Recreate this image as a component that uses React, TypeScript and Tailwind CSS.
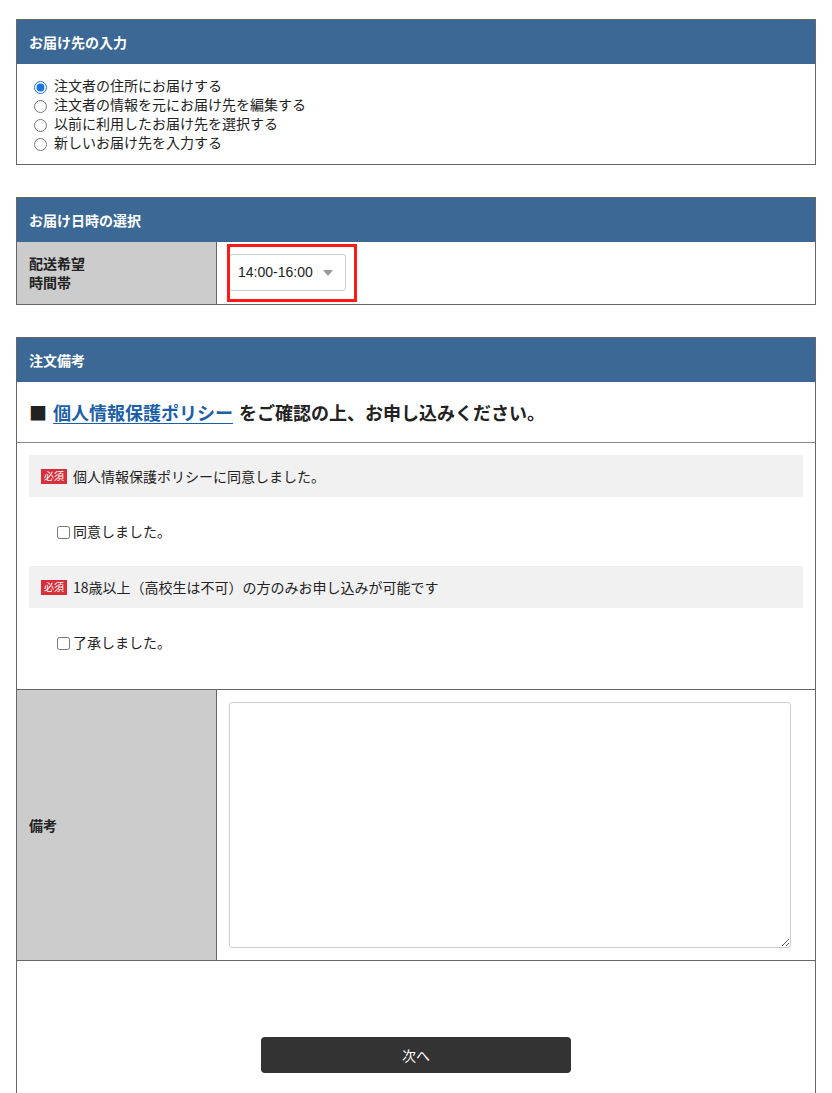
import React from "react";

const font = { fontFamily: '"Noto Sans CJK JP", "Noto Sans", sans-serif' };

const SectionHeader = ({ title }: { title: string }) => (
  <div className="h-[44px] bg-[#3b6895] flex items-center px-3 text-[14px] font-bold text-white">
    {title}
  </div>
);

const Required = () => (
  <span className="inline-flex items-center justify-center bg-[#d7303b] text-white text-[10px] leading-none h-[15px] px-[3px] mr-[6px]">
    必須
  </span>
);

const radios = [
  "注文者の住所にお届けする",
  "注文者の情報を元にお届け先を編集する",
  "以前に利用したお届け先を選択する",
  "新しいお届け先を入力する",
];

export default function App() {
  return (
    <div className="bg-white text-[#222] min-h-[1093px] pt-[19px]" style={font}>
      {/* お届け先 */}
      <section className="mx-4 border border-[#666]">
        <SectionHeader title="お届け先の入力" />
        <div className="pt-[12px] pb-[12px] px-4 text-[14px] leading-[19px]">
          {radios.map((r, i) => (
            <label key={r} className="flex items-center">
              <input
                type="radio"
                name="dest"
                defaultChecked={i === 0}
                className="w-[13px] h-[13px] m-0 mt-[3px] ml-[1px] mr-[7px] accent-[#1a73e8]"
              />
              {r}
            </label>
          ))}
        </div>
      </section>

      {/* 日時 */}
      <section className="mx-4 mt-[32px] border border-[#666]">
        <SectionHeader title="お届け日時の選択" />
        <div className="flex h-[62px]">
          <div className="w-[200px] shrink-0 bg-[#cccccc] border-r border-[#666] flex items-center px-3 text-[14px] font-bold leading-[19px]">
            配送希望
            <br />
            時間帯
          </div>
          <div className="relative flex-1 pl-[12px] pt-[12px]">
            <div className="w-[117px] h-[37px] border border-[#ccc] rounded-[3px] flex items-center justify-between pl-[8px] pr-[12px] text-[14px] text-[#222]" style={{ fontFamily: '"Liberation Sans", "Noto Sans CJK JP", sans-serif' }}>
              14:00-16:00
              <span className="w-0 h-0 border-l-[5px] border-r-[5px] border-t-[6px] border-l-transparent border-r-transparent border-t-[#999]" />
            </div>
            <div className="absolute left-[10px] top-[2px] w-[130px] h-[58px] border-[3px] border-[#ff1a1a] pointer-events-none" />
          </div>
        </div>
      </section>

      {/* 注文備考 */}
      <section className="mx-4 mt-[32px] border border-[#666] border-b-0">
        <SectionHeader title="注文備考" />
        <div className="h-[61px] flex items-center px-3 text-[18px] font-bold border-b border-[#888]">
          <span className="mr-[6px]">■</span>
          <a href="#" className="text-[#1b5fa8] underline underline-offset-[3px] mr-[6px]">
            個人情報保護ポリシー
          </a>
          をご確認の上、お申し込みください。
        </div>

        <div className="px-3 pt-[12px] pb-[12px] text-[14px]">
          <div className="h-[42px] bg-[#f1f1f1] flex items-center px-3">
            <Required />
            個人情報保護ポリシーに同意しました。
          </div>
          <label className="h-[69px] flex items-center pl-[28px]">
            <input type="checkbox" className="w-[13px] h-[13px] m-0 mt-[2px] mr-[3px]" />
            同意しました。
          </label>
          <div className="h-[42px] bg-[#f1f1f1] flex items-center px-3">
            <Required />
            18歳以上（高校生は不可）の方のみお申し込みが可能です
          </div>
          <label className="h-[69px] flex items-center pl-[28px]">
            <input type="checkbox" className="w-[13px] h-[13px] m-0 mt-[2px] mr-[3px]" />
            了承しました。
          </label>
        </div>

        <div className="flex h-[272px] border-t border-b border-[#666]">
          <div className="w-[200px] shrink-0 bg-[#cccccc] border-r border-[#666] flex items-center px-3 text-[14px] font-bold">
            備考
          </div>
          <div className="flex-1 pl-[12px] pt-[12px]">
            <textarea className="block w-[562px] h-[246px] border border-[#ccc] rounded-[3px] outline-none" />
          </div>
        </div>

        <div className="h-[140px] flex justify-center pt-[76px]">
          <button className="w-[310px] h-[36px] bg-[#333] text-white text-[14px] rounded-[4px]">
            次へ
          </button>
        </div>
      </section>
    </div>
  );
}
